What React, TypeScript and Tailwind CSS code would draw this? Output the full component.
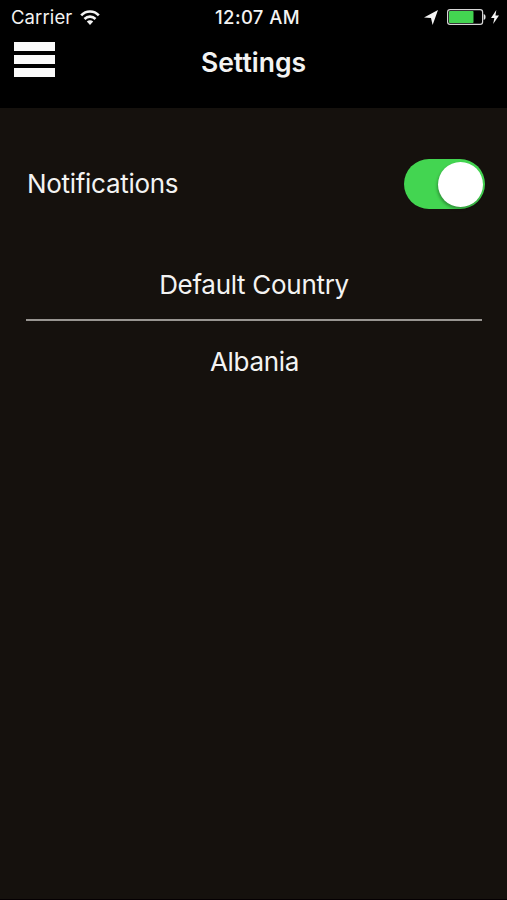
import React, { useState } from 'react';

const WifiIcon = () => (
  <svg width="20" height="15" viewBox="0 0 20 15" fill="none" stroke="#f4f4f4" strokeWidth="2.6">
    <path d="M1.2,5.4 C6,0.2 14,0.2 18.8,5.4" />
    <path d="M4.5,9 C7.6,5.8 12.4,5.8 15.5,9" />
    <path d="M10,15 L6.8,11.5 C8.6,9.8 11.4,9.8 13.2,11.5 Z" fill="#f4f4f4" stroke="none" />
  </svg>
);

const LocationIcon = () => (
  <svg width="14" height="15" viewBox="0 0 14 15" fill="#f4f4f4">
    <path d="M14,0 L8.6,15 L7,8 L0,7.4 Z" />
  </svg>
);

const BatteryIcon = () => (
  <svg width="39" height="16" viewBox="0 0 39 16">
    <rect x="0.6" y="0.6" width="35" height="14.8" rx="2.4" fill="none" stroke="#d6d6d6" strokeWidth="1.2" />
    <rect x="2" y="2" width="24.5" height="12" rx="0.8" fill="#43d551" />
    <path d="M36.7,5 C39.2,5.6 39.2,10.4 36.7,11 Z" fill="#e6e6e6" />
  </svg>
);

const BoltIcon = () => (
  <svg width="8" height="14" viewBox="0 0 9 14" preserveAspectRatio="none" fill="#f4f4f4">
    <path d="M6,0 L0,8 L3.8,8 L2.4,14 L9,5.4 L5,5.4 Z" />
  </svg>
);

const StatusBar = () => (
  <div className="grid h-[34px] grid-cols-3 items-center pl-[11px] pr-[8px] text-[18.5px] leading-none">
    <div className="flex items-center gap-[8px]">
      <span className="tracking-[0.1px]">Carrier</span>
      <WifiIcon />
    </div>
    <span className="whitespace-nowrap pl-[5px] text-center font-medium tracking-[0.4px]">12:07 AM</span>
    <div className="flex items-center justify-end">
      <LocationIcon />
      <span className="ml-[9px] mr-[5px]"><BatteryIcon /></span>
      <BoltIcon />
    </div>
  </div>
);

const NavBar = () => (
  <div className="grid h-[74px] grid-cols-[1fr_auto_1fr] items-start px-[14px]">
    <button type="button" aria-label="Menu" className="flex w-[41px] flex-col gap-[4px] pt-[8px]">
      <span className="h-[9px] bg-[#fafafa]" />
      <span className="h-[9px] bg-[#fafafa]" />
      <span className="h-[9px] bg-[#fafafa]" />
    </button>
    <h1 className="pt-[12px] text-[26.5px] font-semibold leading-[33px]">Settings</h1>
  </div>
);

export default function App() {
  const [enabled, setEnabled] = useState(true);

  return (
    <div className="flex h-[900px] w-[507px] flex-col overflow-hidden border-b border-[#050002] bg-[#15110d] font-['Inter',sans-serif] text-[#f3f3f2]">
      <header className="bg-black">
        <StatusBar />
        <NavBar />
      </header>

      <main className="pl-[26px] pr-[25px]">
        {/* Notifications */}
        <div className="-mr-[3px] flex items-center justify-between pt-[51px]">
          <span className="pl-px text-[26px] leading-[32px] tracking-[-0.3px]">Notifications</span>
          <button
            type="button"
            role="switch"
            aria-checked={enabled}
            aria-label="Notifications"
            onClick={() => setEnabled(!enabled)}
            className={`flex h-[50px] w-[81px] items-center rounded-full px-[2px] ${enabled ? 'justify-end bg-[#43d551]' : 'justify-start bg-[#555555]'}`}
          >
            <span className="h-[45px] w-[45px] rounded-full bg-white shadow-[-1px_2px_3px_rgba(0,0,0,0.3)]" />
          </button>
        </div>

        {/* Country */}
        <div className="pt-[60px] text-center text-[26px] leading-[32px] tracking-[-0.3px]">
          <h2 className="border-b-2 border-[#989591] pb-[18px]">Default Country</h2>
          <p className="pl-px pt-[25px]">Albania</p>
        </div>
      </main>
    </div>
  );
}
